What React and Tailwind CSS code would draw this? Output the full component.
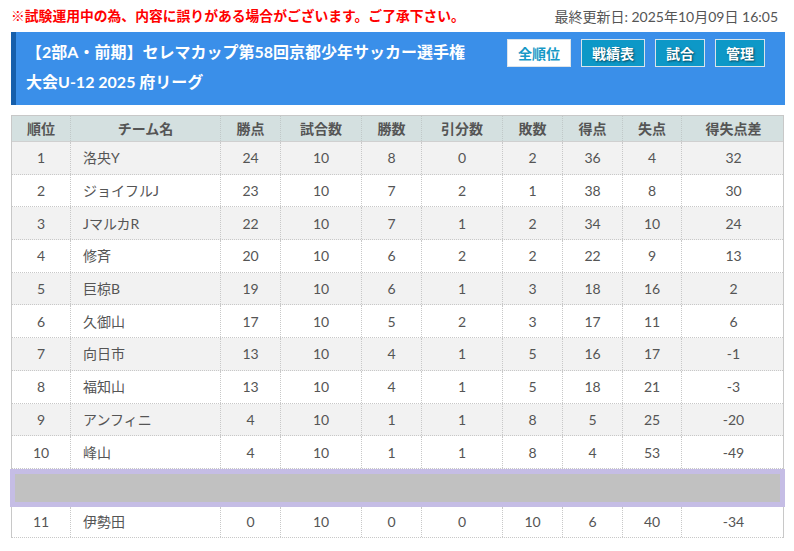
import React from "react";

const rows = [
  [1, "洛央Y", 24, 10, 8, 0, 2, 36, 4, 32],
  [2, "ジョイフルJ", 23, 10, 7, 2, 1, 38, 8, 30],
  [3, "JマルカR", 22, 10, 7, 1, 2, 34, 10, 24],
  [4, "修斉", 20, 10, 6, 2, 2, 22, 9, 13],
  [5, "巨椋B", 19, 10, 6, 1, 3, 18, 16, 2],
  [6, "久御山", 17, 10, 5, 2, 3, 17, 11, 6],
  [7, "向日市", 13, 10, 4, 1, 5, 16, 17, -1],
  [8, "福知山", 13, 10, 4, 1, 5, 18, 21, -3],
  [9, "アンフィニ", 4, 10, 1, 1, 8, 5, 25, -20],
  [10, "峰山", 4, 10, 1, 1, 8, 4, 53, -49],
];
const last = [11, "伊勢田", 0, 10, 0, 0, 10, 6, 40, -34];
const heads = ["順位", "チーム名", "勝点", "試合数", "勝数", "引分数", "敗数", "得点", "失点", "得失点差"];
const cols = "grid grid-cols-[59px_150px_60px_81px_60px_81px_60px_60px_59px_103px]";

function Row({ r, bg, h }) {
  return (
    <div className={`${cols} ${bg} ${h} border-b border-dotted border-[#c8c8c8] text-[14px] text-[#555]`}>
      {r.map((v, i) => (
        <div
          key={i}
          className={`flex items-center ${i === 1 ? "justify-start pl-[12px]" : "justify-center"} ${i < 9 ? "border-r border-dotted border-[#c8c8c8]" : ""}`}
        >
          {v}
        </div>
      ))}
    </div>
  );
}

export default function App() {
  return (
    <div className="w-[794px] h-[551px] bg-white overflow-hidden font-['Lato','Noto_Sans_CJK_JP',sans-serif]">
      <div className="flex items-center justify-between h-[32px] pl-[11px] pr-[16px]">
        <span className="text-[13.8px] font-bold text-[#ff0000]">※試験運用中の為、内容に誤りがある場合がございます。ご了承下さい。</span>
        <span className="text-[14px] text-[#555]">最終更新日: 2025年10月09日 16:05</span>
      </div>
      <div className="mx-[11px] mr-[9px] h-[73px] bg-[#3a8fe9] border-l-[5px] border-[#165fab] flex items-start justify-between pl-[10px] pr-[20px] pt-[5px]">
        <div className="text-white font-bold text-[16px] leading-[30px] w-[470px]">
          <div>【2部A・前期】セレマカップ第58回京都少年サッカー選手権</div>
          <div>大会U-12 2025 府リーグ</div>
        </div>
        <div className="flex gap-[10px] mt-[2px]">
          <div className="w-[64px] h-[28px] flex items-center justify-center bg-white border border-[#dde4ea] text-[#1798c6] font-bold text-[14px]">全順位</div>
          <div className="w-[64px] h-[28px] flex items-center justify-center bg-[#0d98c7] border border-[#d8e4ea] text-white font-bold text-[14px] [text-shadow:1px_1px_2px_rgba(0,0,0,0.55)]">戦績表</div>
          <div className="w-[50px] h-[28px] flex items-center justify-center bg-[#0d98c7] border border-[#d8e4ea] text-white font-bold text-[14px] [text-shadow:1px_1px_2px_rgba(0,0,0,0.55)]">試合</div>
          <div className="w-[50px] h-[28px] flex items-center justify-center bg-[#0d98c7] border border-[#d8e4ea] text-white font-bold text-[14px] [text-shadow:1px_1px_2px_rgba(0,0,0,0.55)]">管理</div>
        </div>
      </div>
      <div className="mt-[10px] ml-[11px] w-[773px] border-l border-r border-t border-[#c8c8c8] relative">
        <div className={`${cols} bg-[#d4e0e0] h-[26px] border-b border-[#d0d0d0] text-[14px] font-bold text-[#555]`}>
          {heads.map((h, i) => (
            <div key={i} className={`flex items-center justify-center ${i < 9 ? "border-r border-dotted border-[#c0c8c8]" : ""}`}>{h}</div>
          ))}
        </div>
        {rows.map((r, i) => (
          <Row key={i} r={r} bg={i % 2 === 0 ? "bg-[#f2f2f2]" : "bg-white"} h="h-[32.7px]" />
        ))}
        <div className="h-[38px] -mx-[2px] border-[5px] border-[#c5bde5] bg-[#c1c1c1]" />
        <Row r={last} bg="bg-white" h="h-[31px]" />
      </div>
    </div>
  );
}
